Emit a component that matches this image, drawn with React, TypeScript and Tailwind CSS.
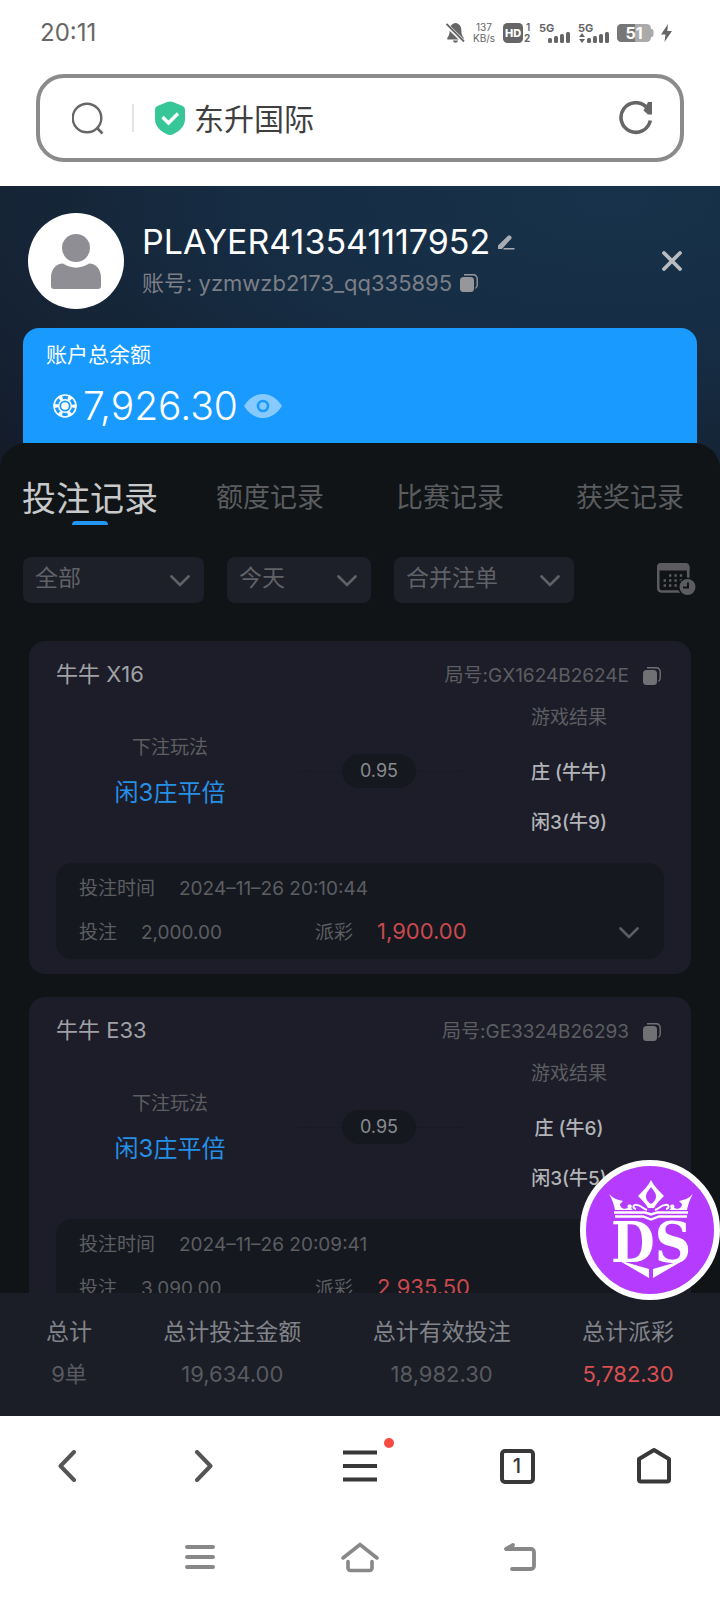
import type { ReactNode } from 'react'

import { Fragment, useState } from 'react'

type Bet = {
  id: string
  table: string
  play: string
  odds: string
  results: string[]
  time: string
  stake: string
  payout: string
}

const bets: Bet[] = [
  {
    id: 'GX1624B2624E',
    table: '牛牛 X16',
    play: '闲3庄平倍',
    odds: '0.95',
    results: ['庄 (牛牛)', '闲3(牛9)'],
    time: '2024–11–26 20:10:44',
    stake: '2,000.00',
    payout: '1,900.00'
  },
  {
    id: 'GE3324B26293',
    table: '牛牛 E33',
    play: '闲3庄平倍',
    odds: '0.95',
    results: ['庄 (牛6)', '闲3(牛5)'],
    time: '2024–11–26 20:09:41',
    stake: '3,090.00',
    payout: '2,935.50'
  }
]

const tabs = ['投注记录', '额度记录', '比赛记录', '获奖记录']

const totals = [
  { label: '总计', value: '9单' },
  { label: '总计投注金额', value: '19,634.00' },
  { label: '总计有效投注', value: '18,982.30' },
  { label: '总计派彩', value: '5,782.30', highlight: true }
]

function CopyIcon() {
  return (
    <svg width="18" height="18" viewBox="0 0 18 18" fill="none">
      <rect x="0" y="3" width="14" height="15" rx="3.5" fill="currentColor" />
      <path
        d="M4 .8h9.5a3.7 3.7 0 0 1 3.7 3.7V11c0 1.500-.7 2.800-1.800 3.400"
        stroke="currentColor"
        strokeWidth="1.400"
      />
    </svg>
  )
}

function ChevronDown({ className }: { className?: string }) {
  return (
    <svg
      width="20"
      height="12"
      viewBox="0 0 20 12"
      fill="none"
      className={className}
    >
      <path
        d="M1.500 1.500 10 10l8.500-8.500"
        stroke="currentColor"
        strokeWidth="2.600"
        strokeLinecap="round"
      />
    </svg>
  )
}

function SignalIcon({ updown }: { updown?: boolean }) {
  return (
    <svg width="32" height="22" viewBox="0 0 32 22" fill="#666">
      <text x="0" y="10" fontSize="11" fontWeight="700">
        5G
      </text>
      {updown && <path d="M1 15l3-4 3 4zM1 17h6l-3 4z" />}
      <rect x="9" y="16" width="4" height="5" rx="1.500" />
      <rect x="15" y="14" width="4" height="7" rx="1.500" />
      <rect x="21" y="12" width="4" height="9" rx="1.500" />
      <rect x="27" y="10" width="4" height="11" rx="1.500" />
    </svg>
  )
}

function StatusBar() {
  return (
    <div className="flex h-[66px] shrink-0 items-center justify-between pl-10 pr-12 text-[#666]">
      <span className="text-2xl">20:11</span>
      <div className="flex items-center gap-[7px]">
        <svg width="19" height="20" viewBox="0 0 19 20" fill="#666">
          <path d="M9.500 0c3.500.6 5.800 3 5.800 6.700 0 4 .7 6.300 2.400 8v1.800H1.300v-1.800c1.700-1.700 2.400-4 2.400-8C3.700 3 6 .6 9.500 0zM7 17.500h5c-.3 3-4.700 3-5 0z" />
          <path d="M0 1.500 18 19" stroke="#fff" strokeWidth="4" />
          <path d="M.5 1 18 18.500" stroke="#666" strokeWidth="1.800" />
        </svg>
        <span className="flex w-6 flex-col items-center text-[10px] leading-[11px]">
          <span>137</span>
          <span>KB/s</span>
        </span>
        <svg width="29" height="22" viewBox="0 0 29 22" fill="#666">
          <rect x="0" y="1" width="20" height="20" rx="4.500" />
          <text
            x="10"
            y="15"
            fontSize="11"
            fontWeight="800"
            fill="#fff"
            textAnchor="middle"
          >
            HD
          </text>
          <text x="23" y="9" fontSize="10" fontWeight="600">
            1
          </text>
          <text x="21" y="20" fontSize="10" fontWeight="700">
            2
          </text>
        </svg>
        <SignalIcon />
        <SignalIcon updown />
        <svg width="37" height="20" viewBox="0 0 37 20">
          <path d="M33 6h1.500a2 2 0 0 1 2 2v4a2 2 0 0 1-2 2H33z" fill="#aaa" />
          <rect y="1" width="34" height="18" rx="4.500" fill="#aaa" />
          <path d="M4.500 1H18v18H4.500A4.500 4.500 0 0 1 0 14.500v-9A4.500 4.500 0 0 1 4.500 1z" fill="#777" />
          <text
            x="17"
            y="16"
            fontSize="16"
            fontWeight="700"
            fill="#fff"
            textAnchor="middle"
          >
            51
          </text>
        </svg>
        <svg width="11" height="18" viewBox="0 0 11 18" fill="#666">
          <path d="M7 0 0 10.500h4.500L3.500 18 11 7H6.300z" />
        </svg>
      </div>
    </div>
  )
}

function AddressBar() {
  return (
    <div className="mx-9 mb-6 mt-2 flex h-[88px] shrink-0 items-center rounded-[28px] border-4 border-[#8b8b8b] pl-8 pr-[27px]">
      <svg width="32" height="33" viewBox="0 0 32 33" fill="none">
        <circle cx="15" cy="16" r="14.300" stroke="#666" strokeWidth="2.400" />
        <path d="m25 26 5.500 5.500" stroke="#666" strokeWidth="2.600" />
      </svg>
      <span className="ml-7 h-7 w-0.5 bg-[#e4e4e4]" />
      <svg
        width="32"
        height="34"
        viewBox="0 0 32 34"
        fill="none"
        className="ml-5 shrink-0"
      >
        <path
          d="M12.500 1.200c2.400-1 4.600-1 7 0l8.500 3.600c2 .8 3 2 3 4V18c0 7.500-6 12.500-11.800 15.200-2.200 1-4.200 1-6.400 0C7 30.500 1 25.500 1 18V8.800c0-2 1-3.200 3-4z"
          fill="#37c698"
        />
        <path d="m8.500 16 6 6L24 12.500" stroke="#fff" strokeWidth="3.400" />
      </svg>
      <input
        aria-label="网址"
        defaultValue="东升国际"
        className="ml-2 min-w-0 flex-1 bg-transparent pt-0.5 text-[30px] text-[#3f3f3f] outline-none"
      />
      <button aria-label="刷新">
        <svg width="34" height="34" viewBox="0 0 34 34" fill="none">
          <path
            d="M27.500 6.300A14.800 14.800 0 1 0 31.300 19.500"
            stroke="#666"
            strokeWidth="3.600"
          />
          <path d="M29 1h4v12.500h-4L24.500 9.500z" fill="#666" />
        </svg>
      </button>
    </div>
  )
}

function Profile() {
  return (
    <header className="shrink-0 bg-[radial-gradient(ellipse_at_85%_5%,#17324a,#162d44_40%,#152233_75%,#141b28)] px-[23px] pb-7 pt-[27px]">
      <div className="flex items-center pl-[5px] pr-[15px]">
        <div className="flex size-24 items-center justify-center rounded-full bg-white">
          <svg width="50" height="55" viewBox="0 0 50 55" fill="#8f8e94">
            <circle cx="25" cy="14" r="14" />
            <path d="M12 29.500c8 5.500 18 5.500 26 0 7 0 12 6 12 14V52c0 2-1 3-3 3H3c-2 0-3-1-3-3v-8.500c0-8 5-14 12-14z" />
          </svg>
        </div>
        <div className="ml-[18px] flex-1 pt-0.5">
          <div className="flex items-center gap-2">
            <h1 className="text-[34px] leading-[42px] text-white">
              PLAYER413541117952
            </h1>
            <button aria-label="编辑昵称" className="text-[#a9abb3]">
              <svg width="17" height="15" viewBox="0 0 17 15" fill="currentColor">
                <path d="M0 14v-3.500L10 .8c.8-.8 1.500-.8 2.300 0l.8.8c.8.8.8 1.500 0 2.300L4 14zM6 13h10.500v1.500H5z" />
              </svg>
            </button>
          </div>
          <div className="flex items-center gap-2 text-[#7c7f87]">
            <p className="text-[22px] leading-10">
              账号: yzmwzb2173_qq335895
            </p>
            <button aria-label="复制账号" className="text-[#97969b]">
              <CopyIcon />
            </button>
          </div>
        </div>
        <button aria-label="关闭" className="text-[#b9bbc1]">
          <svg width="20" height="20" viewBox="0 0 20 20" fill="none">
            <path
              d="m2 2 16 16M18 2 2 18"
              stroke="currentColor"
              strokeWidth="3.800"
              strokeLinecap="round"
            />
          </svg>
        </button>
      </div>
      <div className="mt-[19px] rounded-t-2xl bg-[#189aff] px-[23px] pb-[11px] pt-[13px] text-white">
        <p className="text-[21px] leading-7">账户总余额</p>
        <div className="mt-[11px] flex items-center pl-[7px]">
          <svg width="24" height="24" viewBox="0 0 24 24" fill="none" stroke="#fff">
            <circle cx="12" cy="12" r="11" strokeWidth="1.600" />
            <circle cx="12" cy="12" r="6.300" strokeWidth="1.500" />
            <circle cx="12" cy="12" r="3.800" fill="#fff" stroke="none" />
            <circle
              cx="12"
              cy="12"
              r="8.800"
              strokeWidth="4"
              strokeDasharray="3.600 5.615"
              strokeDashoffset="1.800"
            />
          </svg>
          <span className="ml-1.5 text-[39px] font-light leading-[52px]">
            7,926.30
          </span>
          <button aria-label="隐藏余额" className="ml-1.5 text-[#86caff]">
            <svg width="38" height="24" viewBox="0 0 38 24">
              <path d="M0 12C10-4 28-4 38 12 28 28 10 28 0 12z" fill="currentColor" />
              <circle
                cx="19"
                cy="12"
                r="5"
                fill="none"
                stroke="#189aff"
                strokeWidth="2.600"
              />
            </svg>
          </button>
        </div>
      </div>
    </header>
  )
}

function Filter({
  label,
  options,
  className
}: {
  label: string
  options: string[]
  className: string
}) {
  return (
    <div className={`relative text-[#606267] ${className}`}>
      <select
        aria-label={label}
        className="h-[46px] w-full appearance-none rounded-lg bg-[#1d1f29] pb-1 pl-3 text-[23px] outline-none"
      >
        {options.map((option) => (
          <option key={option}>{option}</option>
        ))}
      </select>
      <ChevronDown className="pointer-events-none absolute right-3.5 top-[18px]" />
    </div>
  )
}

function BetCard({ bet }: { bet: Bet }) {
  return (
    <article className="rounded-2xl bg-[#1c1d28] px-[27px] pb-[15px] pt-5 text-[#5c5e62]">
      <div className="flex h-[26px] items-center justify-between">
        <h2 className="text-[22px] text-[#a0a1a6]">{bet.table}</h2>
        <div className="flex items-center gap-3.5 pr-[3px] pt-1">
          <span className="text-[19px]">局号:{bet.id}</span>
          <button aria-label="复制局号" className="text-[#707174]">
            <CopyIcon />
          </button>
        </div>
      </div>
      <div className="grid h-[168px] grid-cols-[6fr_5fr_5fr] items-center text-center">
        <div className="pb-0.5 leading-[45px]">
          <p className="text-[19px]">下注玩法</p>
          <p className="text-2xl leading-[45px] text-[#2590e6]">{bet.play}</p>
        </div>
        <div className="flex items-center justify-center">
          <span className="w-12 border-t border-dashed border-[#161921]" />
          <span className="rounded-full bg-[#15181f] px-[18px] text-lg leading-[34px] text-[#8a8b8f]">
            {bet.odds}
          </span>
          <span className="w-12 border-t border-dashed border-[#161921]" />
        </div>
        <div className="pb-1.5 text-[19px] leading-[50px]">
          <p className="leading-[60px]">游戏结果</p>
          {bet.results.map((result) => (
            <p key={result} className="font-medium text-[#b3b4b8]">
              {result}
            </p>
          ))}
        </div>
      </div>
      <div className="mt-2 rounded-2xl bg-[#15181f] px-[23px] pb-1 pt-1 text-[19px] leading-[44px]">
        <div className="flex gap-6">
          <span>投注时间</span>
          <span>{bet.time}</span>
        </div>
        <div className="flex items-center">
          <div className="flex w-[42%] gap-6">
            <span>投注</span>
            <span>{bet.stake}</span>
          </div>
          <div className="flex flex-1 gap-6">
            <span>派彩</span>
            <span className="text-[22px] leading-10 text-[#c9494e]">
              {bet.payout}
            </span>
          </div>
          <button aria-label="展开">
            <ChevronDown className="w-6" />
          </button>
        </div>
      </div>
    </article>
  )
}

function Records() {
  const [active, setActive] = useState(tabs[0])

  return (
    <main className="-mt-7 flex min-h-0 flex-1 flex-col rounded-t-[26px] bg-[#101416]">
      <nav className="grid shrink-0 grid-cols-4 pt-[26px]">
        {tabs.map((tab) => (
          <button
            key={tab}
            onClick={() => setActive(tab)}
            className={
              tab === active
                ? 'relative h-[58px] whitespace-nowrap text-[34px] text-[#c8c9cb]'
                : 'relative h-[58px] whitespace-nowrap text-[27px] text-[#5a5c5f]'
            }
          >
            {tab}
            {tab === active && (
              <span className="absolute bottom-0.5 left-1/2 h-1 w-9 -translate-x-1/2 rounded-t bg-[#2196f3]" />
            )}
          </button>
        ))}
      </nav>
      <div className="mt-[30px] flex shrink-0 items-center px-[23px]">
        <Filter label="类型" options={['全部']} className="w-[181px]" />
        <Filter label="日期" options={['今天']} className="ml-[23px] w-36" />
        <Filter
          label="注单方式"
          options={['合并注单']}
          className="ml-[23px] w-[180px]"
        />
        <button aria-label="选择日期" className="ml-auto text-[#5b5b60]">
          <svg width="40" height="34" viewBox="0 0 40 34" fill="none">
            <rect
              x="1.200"
              y="1.500"
              width="30"
              height="27"
              rx="3.500"
              stroke="currentColor"
              strokeWidth="2.600"
            />
            <path d="M0 4A4 4 0 0 1 4 0h24.500a4 4 0 0 1 4 4v3.500H0z" fill="currentColor" />
            <g stroke="currentColor" strokeWidth="2.400" strokeDasharray="2.400 3">
              <path d="M12 12.500h14" />
              <path d="M6.600 17.500h19" />
              <path d="M6.600 22.500h14" />
            </g>
            <circle cx="30.500" cy="24" r="9.500" fill="#101416" />
            <circle cx="30.500" cy="24" r="8" fill="currentColor" />
            <path d="M31 19.500v5h-5" stroke="#101416" strokeWidth="2" />
          </svg>
        </button>
      </div>
      <section className="min-h-0 flex-1 space-y-[23px] overflow-y-auto px-[29px] pt-[38px] [scrollbar-width:none]">
        {bets.map((bet) => (
          <BetCard key={bet.id} bet={bet} />
        ))}
      </section>
    </main>
  )
}

function Totals() {
  return (
    <dl className="relative flex h-[123px] shrink-0 justify-between bg-[#1b1e27] px-[46px] pt-[18px] text-center text-[23px] leading-[42px]">
      {totals.map((total) => (
        <div key={total.label}>
          <dt className="text-[#82848a]">{total.label}</dt>
          <dd
            className={
              total.highlight
                ? 'text-[22px] text-[#d94f52]'
                : 'text-[22px] text-[#585a5f]'
            }
          >
            {total.value}
          </dd>
        </div>
      ))}
      <Badge />
    </dl>
  )
}

function Badge() {
  return (
    <div className="absolute -top-[133px] right-0 size-[140px]">
      <svg width="140" height="140" viewBox="0 0 140 140">
        <circle cx="70" cy="70" r="67" fill="#b53bff" stroke="#fff" strokeWidth="6" />
        <path
          d="M71 20c3 6 7 10 13 16-4 4-8 8-10 12h-6c-2-4-6-8-10-12 6-6 10-10 13-16zm0 7c-3 4-5 6-5 9.500 0 3 2 5.500 5 7.500 3-2 5-4.500 5-7.500 0-3.500-2-5.500-5-9.500z"
          fill="#fff"
          fillRule="evenodd"
        />
        <path
          d="M29 34c4 4 8 6 14 7l-3 3c0 4 4 6 8 4-2-3 2-5 4-2-1 2-1 3 1 4H35c-1-6-3-11-6-16zM113 34c-4 4-8 6-14 7l3 3c0 4-4 6-8 4 2-3-2-5-4-2 1 2 1 3-1 4h18c1-6 3-11 6-16z"
          fill="#fff"
        />
        <path
          d="M56 49c-4-1-3-5 1-4 4 0 6 4 10 5M86 49c4-1 3-5-1-4-4 0-6 4-10 5"
          stroke="#fff"
          strokeWidth="2"
          fill="none"
        />
        <path
          d="M34 52.500h31l6 2 6-2h31M35 56.500h28l8 3 8-3h28"
          stroke="#fff"
          strokeWidth="2.400"
          fill="none"
        />
        <text
          x="71"
          y="102"
          fontSize="56"
          fontWeight="700"
          textAnchor="middle"
          fill="#fff"
          className="font-['DejaVu_Serif_Condensed','DejaVu_Serif',serif]"
        >
          DS
        </text>
        <path d="M38 100l31 9v9zM104 100l-31 9v9z" fill="#fff" />
      </svg>
    </div>
  )
}

function NavButton({
  label,
  children
}: {
  label: string
  children: ReactNode
}) {
  return (
    <button aria-label={label} className="relative flex justify-center">
      {children}
    </button>
  )
}

function BrowserBar() {
  return (
    <footer className="shrink-0 bg-white text-[#383838]">
      <div className="grid h-[100px] grid-cols-[133fr_141fr_172fr_142fr_132fr] items-center">
        <NavButton label="后退">
          <svg width="18" height="32" viewBox="0 0 18 32" fill="none" stroke="#555" strokeWidth="4">
            <path d="M16 2 2.500 16 16 30" strokeLinecap="round" strokeLinejoin="round" />
          </svg>
        </NavButton>
        <NavButton label="前进">
          <svg width="18" height="32" viewBox="0 0 18 32" fill="none" stroke="#555" strokeWidth="4">
            <path d="m2 2 13.500 14L2 30" strokeLinecap="round" strokeLinejoin="round" />
          </svg>
        </NavButton>
        <NavButton label="菜单">
          <svg width="34" height="32" viewBox="0 0 34 32" fill="none" stroke="currentColor" strokeWidth="4">
            <path d="M0 2.500h34M0 16h34M0 29.500h34" />
          </svg>
          <span className="absolute -top-3 left-1/2 ml-6 size-2.5 rounded-full bg-[#fa4a42]" />
        </NavButton>
        <NavButton label="标签页">
          <span className="flex size-[35px] items-center justify-center rounded-[5px] border-4 border-[#383838] text-xl font-medium leading-none">
            1
          </span>
        </NavButton>
        <NavButton label="主页">
          <svg width="36" height="38" viewBox="0 0 36 38" fill="none" stroke="currentColor" strokeWidth="4">
            <path
              d="M3 12 18 3l15 9v20.500a2 2 0 0 1-2 2H5a2 2 0 0 1-2-2z"
              strokeLinejoin="round"
            />
          </svg>
        </NavButton>
      </div>
      <div className="flex h-[84px] justify-center gap-20 pb-0.5 text-[#888]">
        <button aria-label="最近任务" className="flex w-20 items-center justify-center">
          <svg width="30" height="26" viewBox="0 0 30 26" stroke="currentColor" strokeWidth="4" strokeLinecap="round">
            <path d="M2 3h26M2 13h26M2 23h26" />
          </svg>
        </button>
        <button aria-label="桌面" className="flex w-20 items-center justify-center">
          <svg width="38" height="31" viewBox="0 0 38 31" fill="none" stroke="currentColor" strokeWidth="3.600" strokeLinecap="round">
            <path d="M2 16 19 2.500 36 16M7 19.500V26a2.500 2.500 0 0 0 2.500 2.500h19A2.500 2.500 0 0 0 31 26v-6.500" />
          </svg>
        </button>
        <button aria-label="返回" className="flex w-20 items-center justify-center">
          <svg width="34" height="30" viewBox="0 0 34 30" fill="none" stroke="currentColor" strokeWidth="3.800" strokeLinecap="round" strokeLinejoin="round">
            <path d="M10 3 3 7h25a3 3 0 0 1 3 3v14a3 3 0 0 1-3 3H9" />
          </svg>
        </button>
      </div>
    </footer>
  )
}

export default function App() {
  return (
    <Fragment>
      <div className="flex h-screen flex-col overflow-hidden bg-white font-['Inter','Noto_Sans_CJK_SC',sans-serif]">
        <StatusBar />
        <AddressBar />
        <Profile />
        <Records />
        <Totals />
        <BrowserBar />
      </div>
    </Fragment>
  )
}
